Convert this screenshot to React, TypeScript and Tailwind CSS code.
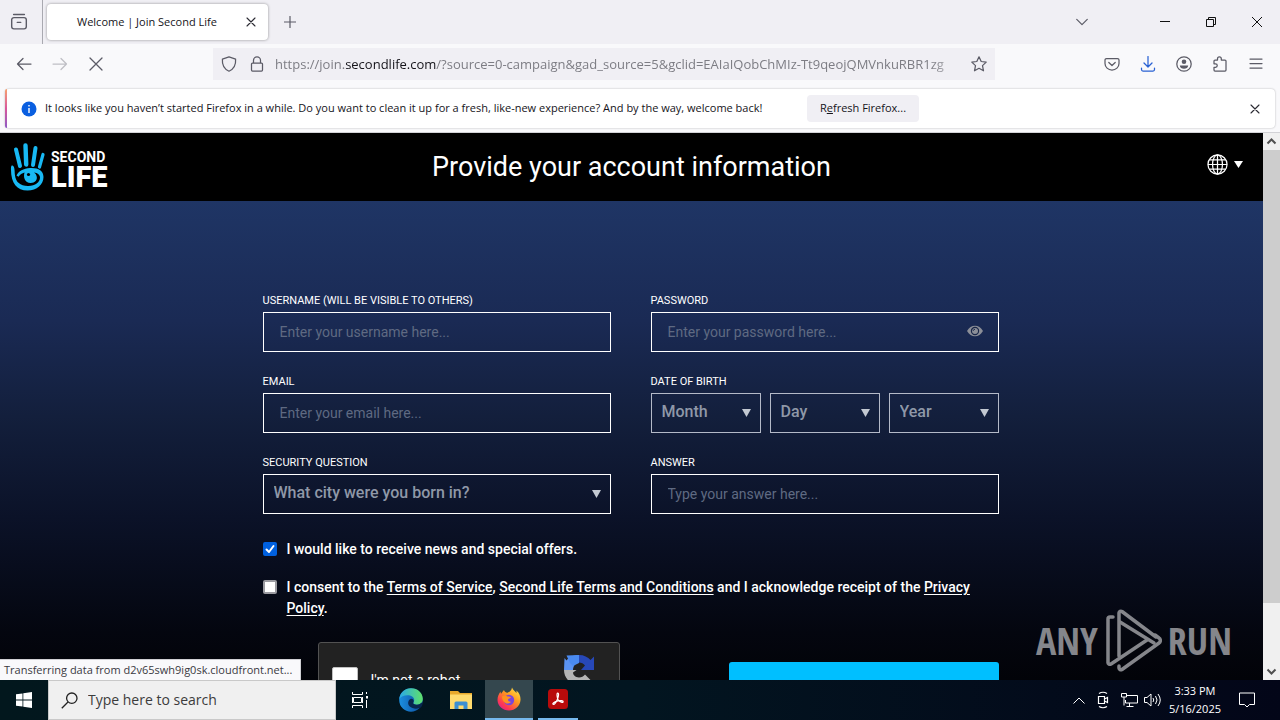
import type { ReactNode } from "react";

const ui = "font-['Open_Sans','Noto_Sans',sans-serif]";

function Icon({ children, size = "size-4", color = "text-[#5b5b66]" }: { children: ReactNode; size?: string; color?: string }) {
  return (
    <svg viewBox="0 0 16 16" className={`${size} ${color} shrink-0`} fill="none" stroke="currentColor" strokeWidth="1.25" strokeLinecap="round" strokeLinejoin="round" aria-hidden="true">
      {children}
    </svg>
  );
}

function Cross({ size = "size-4", color = "text-[#5b5b66]" }: { size?: string; color?: string }) {
  return (
    <Icon size={size} color={color}>
      <path d="M2 2 14 14M14 2 2 14" />
    </Icon>
  );
}

function SmallCross() {
  return (
    <svg viewBox="0 0 10 10" className="size-[10px]" fill="none" stroke="#2b2a33" strokeWidth="1.1" strokeLinecap="round" aria-hidden="true">
      <path d="m1 1 8 8M9 1 1 9" />
    </svg>
  );
}

function TabBar() {
  return (
    <div className="flex h-11 shrink-0 items-center bg-[#f0eff4]">
      <button aria-label="Firefox View" className="flex h-full w-[43px] items-center justify-center border-r border-[#a9a9b0] pr-1">
        <Icon size="size-[18px]">
          <path d="M3.2 1.4h9.6M3.5 4.1h9a2 2 0 0 1 2 2v6a2 2 0 0 1-2 2h-9a2 2 0 0 1-2-2v-6a2 2 0 0 1 2-2zM6.4 8.3h3.2" />
        </Icon>
      </button>
      <div className="ml-1 flex h-9 w-[221px] items-center justify-between rounded bg-white pr-3 pl-[30px] shadow-[0_0_3px_rgba(0,0,0,0.4)]">
        <span className="text-[11px] text-[#15141a]">Welcome | Join Second Life</span>
        <button aria-label="Close tab">
          <SmallCross />
        </button>
      </div>
      <button aria-label="New tab" className="ml-4">
        <Icon size="size-3">
          <path d="M8 .5v15M.5 8h15" strokeWidth="1.600" />
        </Icon>
      </button>
      <button aria-label="List all tabs" className="mr-[72px] ml-auto">
        <Icon size="size-3">
          <path d="m1 4.500 7 7 7-7" strokeWidth="1.600" />
        </Icon>
      </button>
      <button aria-label="Minimize" className="mr-9">
        <svg viewBox="0 0 10 10" className="size-[10px]" aria-hidden="true"><path d="M0 4.500h10" stroke="#111" /></svg>
      </button>
      <button aria-label="Restore" className="mr-9">
        <svg viewBox="0 0 10 10" className="size-[10px]" fill="none" stroke="#111" aria-hidden="true"><path d="M.5 2.500h7v7h-7zM2.500 2.500v-2h7v7h-2" /></svg>
      </button>
      <button aria-label="Close" className="mr-[18px]">
        <svg viewBox="0 0 10 10" className="size-[10px]" stroke="#111" aria-hidden="true"><path d="m0 0 10 10M10 0 0 10" /></svg>
      </button>
    </div>
  );
}

function NavBar() {
  return (
    <div className="flex h-10 shrink-0 items-center bg-[#f9f9fb]">
      <div className="flex w-[213px] items-center gap-5 pl-4">
        <button aria-label="Back"><Icon><path d="M15 8H1.500M7 2.500 1.500 8 7 13.500" /></Icon></button>
        <button aria-label="Forward" disabled><Icon color="text-[#bfbfc5]"><path d="M1 8h13.500M9 2.500 14.500 8 9 13.500" /></Icon></button>
        <button aria-label="Stop"><Cross /></button>
      </div>
      <div className="flex h-8 min-w-0 flex-1 items-center bg-[#f0eff4] px-2">
        <button aria-label="Tracking protection">
          <Icon><path d="M8 .8 14.600 3.100c.4 5.200-1.500 9.800-6.600 12.100C2.900 12.900 1 8.300 1.400 3.100z" /></Icon>
        </button>
        <button aria-label="Site security" className="ml-3">
          <Icon><path d="M3.500 7h9a1 1 0 0 1 1 1v6a1 1 0 0 1-1 1h-9a1 1 0 0 1-1-1V8a1 1 0 0 1 1-1zM4.500 7V4.300a3.500 3.500 0 0 1 7 0V7" /></Icon>
        </button>
        <div role="textbox" aria-label="Address" tabIndex={0} className="ml-[10px] min-w-0 flex-1 overflow-hidden whitespace-nowrap text-[13px] leading-5 text-[#7d7d84] [mask-image:linear-gradient(to_left,transparent,black_36px)]">
          https://join.<span className="text-[#15141a]">secondlife.com</span>/?source=0-campaign&amp;gad_source=5&amp;gclid=EAIaIQobChMIz-Tt9qeojQMVnkuRBR1zg
        </div>
        <button aria-label="Bookmark" className="ml-1">
          <Icon><path d="m8 .8 2.200 4.700 5 .6-3.700 3.500 1 5.200L8 12.300l-4.500 2.500 1-5.200L.8 6.100l5-.6z" /></Icon>
        </button>
      </div>
      <div className="flex w-[285px] items-center justify-end gap-5 pr-4">
        <button aria-label="Pocket"><Icon><path d="M2.500 2.500h11a1.500 1.500 0 0 1 1.500 1.500v3.500a7 6.500 0 0 1-14 0V4a1.500 1.500 0 0 1 1.500-1.500zM4.800 6.500 8 9.500l3.200-3" /></Icon></button>
        <button aria-label="Downloads"><Icon color="text-[#2a62d4]"><path d="M8 .5v10M4 7l4 4 4-4M1.500 12v1.500a1.500 1.500 0 0 0 1.500 1.500h10a1.500 1.500 0 0 0 1.500-1.500V12" /></Icon></button>
        <button aria-label="Account"><Icon><circle cx="8" cy="8" r="7.200" /><circle cx="8" cy="5.800" r="2.300" fill="currentColor" stroke="none" /><path d="M3.800 9.500h8.400c0 2-1.900 3.300-4.200 3.300S3.800 11.500 3.800 9.500z" fill="currentColor" stroke="none" /></Icon></button>
        <button aria-label="Extensions"><Icon><path d="M5.500 4V2.800a1.900 1.900 0 0 1 3.800 0V4H13a1 1 0 0 1 1 1v9a1 1 0 0 1-1 1H3a1 1 0 0 1-1-1v-2.700h1.500a1.700 1.700 0 0 0 0-3.500H2V5a1 1 0 0 1 1-1z" /></Icon></button>
        <button aria-label="Menu"><Icon><path d="M2 3h12M2 7.500h12M2 12h12" /></Icon></button>
      </div>
    </div>
  );
}

function Notice() {
  return (
    <div className="shrink-0 border-b border-[#d2d2d6] bg-[#f9f9fb] px-[5px] pt-[5px] pb-1">
      <div className="flex h-[39px] items-center rounded-sm bg-white shadow-[0_0_2px_rgba(0,0,0,0.3)]">
        <div className="h-full w-0.5 rounded-l bg-gradient-to-b from-[#f6a06c] via-[#d8559a] to-[#8d58c4]" />
        <svg viewBox="0 0 16 16" className="ml-[14px] size-4" aria-hidden="true">
          <circle cx="8" cy="8" r="7.500" fill="#0a5fe0" />
          <path d="M8 7v5M8 4v1.500" stroke="#fff" strokeWidth="1.400" />
        </svg>
        <p className="ml-2 w-[742px] whitespace-nowrap text-[11px] text-[#15141a]">
          It looks like you haven’t started Firefox in a while. Do you want to clean it up for a fresh, like-new experience? And by the way, welcome back!
        </p>
        <button className="ml-5 h-[27px] w-28 whitespace-nowrap rounded-sm bg-[#f0eff4] text-[11px] text-[#15141a]">
          R<span className="underline">e</span>fresh Firefox...
        </button>
        <button aria-label="Dismiss" className="mr-[15px] ml-auto"><SmallCross /></button>
      </div>
    </div>
  );
}

function Logo() {
  return (
    <a href="#home" aria-label="Second Life" className="flex items-center gap-1.5 text-white">
      <svg viewBox="0 0 36 50" className="h-[50px] w-9" fill="none" stroke="#18b9f4" strokeLinecap="round" aria-hidden="true">
        <path d="M7 7.500 11 24" strokeWidth="4" />
        <path d="M16.500 3.500 17.200 22.500" strokeWidth="4.400" />
        <path d="M26.500 6 24 23" strokeWidth="4" />
        <path d="M34 12.500 30.500 25" strokeWidth="3.200" />
        <path d="M3.500 23.500C1.800 23 2 26 2 28c0 13 6 20.500 16.500 20.500C28 48.500 34.500 42.500 34.500 35c0-6.500-5.500-9.500-13.500-9-6.500.5-11.500 3-13.500 7.500l2 1.200c1.500-2.200 3.500-3.400 6-4.200-1.500 5 .5 10.300 6 10.500 4.500.1 7-3 6.200-6.500-.3-2-1.500-3.300-2.700-4 3.500.5 6 2.300 6 5 0 4.600-5 8.700-12 8.500C11 43.800 6.800 40 6 33.500 5.500 29.500 6 24.500 3.500 23.500z" fill="#18b9f4" stroke="none" />
        <circle cx="19.500" cy="32.500" r="1.600" fill="#000" stroke="none" />
      </svg>
      <span className="mt-2 flex flex-col font-bold">
        <span className="text-sm leading-3">SECOND</span>
        <span className="text-[29px] leading-7 font-black">LIFE</span>
      </span>
    </a>
  );
}

const boxClass = "h-10 w-full border bg-transparent outline-none";

function Field({ id, label, children }: { id: string; label: string; children: ReactNode }) {
  return (
    <div className="flex flex-col gap-0.5">
      <label htmlFor={id} className="text-[11px] leading-[18px] text-white">{label}</label>
      {children}
    </div>
  );
}

function TextInput({ id, placeholder, type = "text" }: { id: string; placeholder: string; type?: string }) {
  return <input id={id} type={type} placeholder={placeholder} className={`${boxClass} border-white px-4 text-sm text-white placeholder:text-[#5f6a82]`} />;
}

function Dropdown({ id, value, label, dim }: { id: string; value: string; label?: string; dim?: boolean }) {
  return (
    <div className="relative min-w-0 flex-1">
      <select id={id} aria-label={label} className={`${boxClass} appearance-none px-[10px] pb-0.5 text-base font-medium text-[#8f98a8] ${dim ? "border-[#b4bac8]" : "border-white"}`}>
        <option>{value}</option>
      </select>
      <svg viewBox="0 0 9 8" className="pointer-events-none absolute top-4 right-[10px] h-2 w-[9px]" aria-hidden="true">
        <path d="M0 0h9L4.500 8z" fill="#c3c9d2" />
      </svg>
    </div>
  );
}

function SignupForm() {
  return (
    <form className="mx-auto w-full max-w-[738px] pt-[91px] pr-0.5">
      <div className="grid grid-cols-2 gap-x-10 gap-y-[21px]">
        <Field id="username" label="USERNAME (WILL BE VISIBLE TO OTHERS)"><TextInput id="username" placeholder="Enter your username here..." /></Field>
        <Field id="password" label="PASSWORD">
          <div className="relative">
            <TextInput id="password" type="password" placeholder="Enter your password here..." />
            <button type="button" aria-label="Show password" className="absolute top-3 right-4">
              <svg viewBox="0 0 16 14" className="h-[14px] w-4" aria-hidden="true">
                <path d="M0 7C2 3.500 4.800 1.800 8 1.800S14 3.500 16 7c-2 3.500-4.800 5.200-8 5.200S2 10.500 0 7z" fill="#8c8f98" />
                <circle cx="8" cy="7" r="3.600" fill="none" stroke="#1a2749" strokeWidth="1.200" />
                <path d="M6.200 6.800A2 2 0 0 1 8 5.200" fill="none" stroke="#1a2749" />
              </svg>
            </button>
          </div>
        </Field>
        <Field id="email" label="EMAIL"><TextInput id="email" placeholder="Enter your email here..." /></Field>
        <Field id="month" label="DATE OF BIRTH">
          <div className="flex gap-[9px]">
            <Dropdown id="month" value="Month" dim />
            <Dropdown id="day" label="Day" value="Day" dim />
            <Dropdown id="year" label="Year" value="Year" dim />
          </div>
        </Field>
        <Field id="question" label="SECURITY QUESTION"><Dropdown id="question" value="What city were you born in?" /></Field>
        <Field id="answer" label="ANSWER"><TextInput id="answer" placeholder="Type your answer here..." /></Field>
      </div>

      <div className="mt-[25px] flex flex-col gap-[17px] text-sm leading-[21px] font-medium text-white">
        <div className="flex gap-[10px]">
          <span className="relative mt-[3px] size-[14px] shrink-0">
            <input id="news" type="checkbox" defaultChecked className="peer block size-[14px] appearance-none rounded-xs border-2 border-[#9b9ba1] bg-white checked:border-[#0060df] checked:bg-[#0060df]" />
            <svg viewBox="0 0 14 14" className="pointer-events-none absolute inset-0 hidden size-[14px] peer-checked:block" fill="none" stroke="#fff" strokeWidth="2" strokeLinecap="round" strokeLinejoin="round" aria-hidden="true">
              <path d="m3.500 7.500 2.500 2.500 4.500-6" />
            </svg>
          </span>
          <label htmlFor="news">I would like to receive news and special offers.</label>
        </div>
        <div className="flex gap-[10px]">
          <input id="consent" type="checkbox" className="mt-[3px] size-[14px] shrink-0 appearance-none rounded-xs border-2 border-[#9b9ba1] bg-white checked:bg-[#0060df]" />
          <label htmlFor="consent">
            I consent to the <a href="#tos" className="underline underline-offset-2">Terms of Service</a>, <a href="#terms" className="underline underline-offset-2">Second Life Terms and Conditions</a> and I acknowledge receipt of the <a href="#privacy" className="underline underline-offset-2">Privacy Policy</a>.
          </label>
        </div>
      </div>

      <div className="mt-[23px] flex items-start justify-between pl-[55px]">
        <div className="flex h-[76px] w-[302px] items-center rounded-[3px] border border-[#525252] bg-[#222] pr-6 pl-[13px]">
          <input id="robot" type="checkbox" className="size-[26px] appearance-none rounded-xs border border-[#c1c1c1] bg-white" />
          <label htmlFor="robot" className="ml-[13px] text-sm text-white">I'm not a robot</label>
          <svg viewBox="0 0 32 32" className="mb-[20px] ml-auto size-8" aria-hidden="true">
            <path d="M16 1C9.500 1 5.500 4 3.500 6.500L1.500 4v0L1 16h9c0-3 2-7.500 6-8z" fill="#5b93f2" />
            <path d="M3.500 1.500 16 1v8l-6 3-3-3z" fill="#4a8af0" />
            <path d="M16 1c5 0 9 2 11.500 5L31 2.500V16H18l4-4.500C20.500 9.500 18.500 8.500 16 8.500z" fill="#2748b8" />
            <path d="M1 16c0 8 6.500 15 15 15 5 0 9-2 11.500-5L22 20.500c-1.500 2-3.500 3-6 3-4 0-6-3-6-5l3.500-2.500z" fill="#b4b4b4" />
          </svg>
        </div>
        <button type="button" className="mt-5 h-[50px] w-[270px] rounded-[3px] bg-[#00bfff] text-base font-bold text-black">Continue</button>
      </div>
    </form>
  );
}

function Watermark() {
  return (
    <div className="pointer-events-none absolute right-12 bottom-2 flex items-center font-['Open_Sans_Condensed','Roboto_Condensed','Liberation_Sans_Narrow',sans-serif] text-[38px] font-light text-[#85868b]">
      <span>ANY</span>
      <svg viewBox="0 0 56 64" className="mr-1.5 ml-2 h-16 w-14" fill="none" stroke="currentColor" strokeWidth="3.500" strokeLinejoin="round" strokeLinecap="round" aria-hidden="true">
        <path d="M7 9H4a2 2 0 0 0-2 2v43a2 2 0 0 0 3 2l36-24" />
        <path d="M50 29 16 3.500a2 2 0 0 0-3 1.500v43" />
        <path d="M14 14 48 35" />
        <path d="m13 58 0 2a2 2 0 0 0 3 1.500L53 35a3 3 0 0 0 0-5l-4-3" />
      </svg>
      <span>RUN</span>
    </div>
  );
}

function Page() {
  return (
    <div className="relative flex min-h-0 flex-1 overflow-hidden">
      <main className="flex min-w-0 flex-1 flex-col overflow-hidden font-[Roboto,sans-serif]">
        <header className="grid h-[68px] shrink-0 grid-cols-[1fr_auto_1fr] items-center bg-black px-[9px] text-white">
          <Logo />
          <h1 className="text-[27px]">Provide your account information</h1>
          <button aria-label="Language" className="mr-[11px] mb-1.5 flex items-center gap-1.5 justify-self-end">
            <svg viewBox="0 0 22 22" className="size-[21px]" fill="none" stroke="#fff" strokeWidth="1.300" aria-hidden="true">
              <circle cx="11" cy="11" r="10" />
              <ellipse cx="11" cy="11" rx="5.200" ry="10" />
              <path d="M11 1v20M1 11h20M2.500 6.200h17M2.500 15.800h17" />
            </svg>
            <svg viewBox="0 0 9 7" className="h-[7px] w-[9px]" aria-hidden="true"><path d="M0 0h9L4.500 7z" fill="#fff" /></svg>
          </button>
        </header>
        <div className="min-h-0 flex-1 overflow-hidden bg-[linear-gradient(180deg,#1f3565_0%,#1a2a54_25%,#131f3c_45%,#0b1228_66%,#04060f_90%,#020308_100%)]">
          <SignupForm />
        </div>
      </main>
      <div className="flex w-[17px] shrink-0 flex-col items-center bg-[#f0f0f0]">
        <svg viewBox="0 0 17 17" className="size-[17px] shrink-0" fill="none" stroke="#505050" strokeWidth="2" aria-hidden="true"><path d="m4.500 10.500 4-4 4 4" /></svg>
        <div className="w-full flex-[453] bg-[#cdcdcd]" />
        <div className="flex-[60]" />
        <svg viewBox="0 0 17 17" className="size-[17px] shrink-0" fill="none" stroke="#505050" strokeWidth="2" aria-hidden="true"><path d="m4.500 6.500 4 4 4-4" /></svg>
      </div>
      <div className="absolute bottom-0 left-0 flex h-[21px] items-center whitespace-nowrap border-t border-r border-[#d0d0d4] bg-[#f9f9fb] pr-2 pl-1 text-[11px] text-[#3a3a42]">
        Transferring data from d2v65swh9ig0sk.cloudfront.net...
      </div>
      <Watermark />
    </div>
  );
}

function Taskbar() {
  return (
    <footer className="flex h-10 shrink-0 items-stretch bg-gradient-to-r from-[#02171d] via-[#021520] to-[#030618] text-white">
      <button aria-label="Start" className="flex w-12 items-center justify-center">
        <svg viewBox="0 0 16 16" className="size-4" fill="#fff" aria-hidden="true"><path d="M0 2.300 6.500 1.400v6.200H0zM7.300 1.300 16 0v7.600H7.300zM0 8.400h6.500v6.200L0 13.700zM7.300 8.400H16V16l-8.700-1.300z" /></svg>
      </button>
      <label className="flex w-72 items-center gap-[10px] border border-[#c9c9c9] bg-[#f0f0f0] pl-3">
        <svg viewBox="0 0 17 17" className="size-[17px]" fill="none" stroke="#222" strokeWidth="1.300" aria-hidden="true"><circle cx="10.800" cy="6.200" r="5.200" /><path d="M7 10 .8 16.200" /></svg>
        <input aria-label="Search" placeholder="Type here to search" className="min-w-0 flex-1 bg-transparent text-sm outline-none placeholder:text-[#3c3c3c]" />
      </label>
      <button aria-label="Task view" className="flex w-12 items-center justify-center">
        <svg viewBox="0 0 16 16" className="size-4" fill="none" stroke="#fff" aria-hidden="true"><path d="M.5 0v2.500h10V0M.5 16v-2.500h10V16M1.500 5.500h8v5h-8zM.5 5v6M10.500 5v6M14.500 0v2M14.500 8v8" /><path d="M14 4h2v2.500h-2z" fill="#fff" stroke="none" /></svg>
      </button>
      <button aria-label="Microsoft Edge" className="flex w-[53px] items-center justify-center">
        <svg viewBox="0 0 24 24" className="size-6" aria-hidden="true">
          <defs>
            <linearGradient id="edgeTop" x1="0" x2="1"><stop offset="0" stopColor="#2aa9e8" /><stop offset="1" stopColor="#5fe06a" /></linearGradient>
            <linearGradient id="edgeLow" x1="0" x2="1"><stop offset="0" stopColor="#1b8fe0" /><stop offset="1" stopColor="#0c4a9c" /></linearGradient>
          </defs>
          <circle cx="12" cy="12" r="11.800" fill="url(#edgeLow)" />
          <path d="M.3 11C1 4.500 6 .2 12 .2c7 0 11.800 5 11.800 10.500 0 4-3 6-6 6-2.500 0-4-.9-3.500-1.900.6-.8.9-1.600.9-2.800C15.200 9 12 7.200 8.500 7.200 5 7.200 1.500 8.600.3 11z" fill="url(#edgeTop)" />
          <path d="M14.300 14.800c-.5 1 1 1.900 3.500 1.900 1.700 0 3.500-.7 4.700-2 1.500-.2 1.300 3-.7 4.500-3 2.300-8.300 1.800-11.300-1-2.200-2.200-1.500-6 1-7.200 1.500-.5 3 .3 3.200 1.800 0 .8-.2 1.500-.4 2z" fill="#08264f" />
        </svg>
      </button>
      <button aria-label="File Explorer" className="flex w-12 items-center justify-center">
        <svg viewBox="0 0 22 20" className="h-5 w-[22px]" aria-hidden="true"><path d="M0 1h8l2 2h12v5H0z" fill="#e8a92c" /><path d="M0 4.500h22V19H0z" fill="#ffdb6e" /><path d="M4.500 19v-6a1.500 1.500 0 0 1 1.500-1.500h10a1.500 1.500 0 0 1 1.500 1.500v6h-4v-3.500h-5V19z" fill="#3c8fd2" /></svg>
      </button>
      <button aria-label="Firefox" className="flex w-12 items-center justify-center border-b-2 border-[#76b9ed] bg-[#34474e]">
        <svg viewBox="0 0 24 24" className="size-6" aria-hidden="true">
          <defs><linearGradient id="fox" x1="1" y1="0" x2="0.200" y2="1"><stop offset="0" stopColor="#fff04f" /><stop offset=".45" stopColor="#ff9a1f" /><stop offset=".8" stopColor="#ff3a50" /><stop offset="1" stopColor="#e01f8c" /></linearGradient></defs>
          <path d="M15 .5c1 2.500 3 3.800 4.500 5.500.2-.8 0-1.600-.2-2.400C22.500 6 23.700 9.500 23.500 13c-.4 6-5.500 10.500-11.500 10.500S.6 19 .5 13c0-3.500 1.200-6 3-8.500 0 1 .2 1.800.6 2.300C5 5.500 6.200 4.200 7 3c.2 1.500 1.500 2.500 3.500 2.700C13 5 14.700 3 15 .5z" fill="url(#fox)" />
          <circle cx="12" cy="13" r="5.200" fill="#7a45dc" />
          <path d="M5 9.500c2-1.500 4-1 5.500 0 1.500 0 3 .3 3.500 1-1 1-2.500 1-3 2 0 1.500 1 2.500 3 2.200-1 1.800-3.500 2.300-5.500 1.300C6 14.800 5 12 5 9.500z" fill="#ff9220" />
        </svg>
      </button>
      <button aria-label="Adobe Acrobat" className="ml-[5px] flex w-10 items-center justify-center border-b-2 border-[#76b9ed]">
        <svg viewBox="0 0 20 20" className="size-5" aria-hidden="true"><rect width="20" height="20" rx="3.500" fill="#b80b0b" /><path d="M9.700 4c1.300 0 .9 2.800.2 5-.9 2.500-3 6.500-4.600 6.500-1.600-.8.9-2.900 4.700-3.600 2.500-.5 5.200-.4 5.200.8 0 1.400-3.200.4-4.800-1.600C9 9.200 8.500 4 9.700 4z" fill="none" stroke="#fff" strokeWidth="1.200" /></svg>
      </button>
      <div className="ml-auto flex items-center">
        <button aria-label="Show hidden icons">
          <svg viewBox="0 0 12 7" className="h-[7px] w-3" fill="none" stroke="#fff" aria-hidden="true"><path d="m.5 6.500 5.500-5.500 5.500 5.500" /></svg>
        </button>
        <svg viewBox="0 0 12 18" className="ml-3 h-[18px] w-3" fill="none" stroke="#fff" strokeWidth="1.200" aria-hidden="true"><path d="M2 2.500Q6 0 10 2.500M2 15.500q4 2.500 8 0M1.500 5.500h6v7h-6zM7.500 8l3-1.500v5L7.500 10" /></svg>
        <svg viewBox="0 0 17 16" className="ml-3 h-4 w-[17px]" fill="none" stroke="#fff" aria-hidden="true"><path d="M5 3.500h11.500v7.500H4.500V8M8.500 11v3.500M5.500 14.500h7M.5 1.500h5v3.500h-5zM3 5v8.500" /></svg>
        <svg viewBox="0 0 17 16" className="ml-[6px] h-4 w-[17px]" fill="none" stroke="#fff" aria-hidden="true"><path d="M.5 5.500h2.500l4-3.500v12l-4-3.500H.5zM9 6q1.500 2 0 4M11.500 4q3 4 0 8M14 2q4.500 6 0 12" /></svg>
        <div className="ml-2 text-center text-[11px] leading-[18px]">
          <p>3:33 PM</p>
          <p>5/16/2025</p>
        </div>
        <button aria-label="Notifications" className="mr-[25px] ml-[18px]">
          <svg viewBox="0 0 16 16" className="size-4" fill="none" stroke="#fff" aria-hidden="true"><path d="M.5 1h15v11.500h-5L8 15l-2.500-2.500h-5z" /></svg>
        </button>
      </div>
    </footer>
  );
}

export default function App() {
  return (
    <div className={`flex h-screen flex-col overflow-hidden ${ui}`}>
      <TabBar />
      <NavBar />
      <Notice />
      <Page />
      <Taskbar />
    </div>
  );
}
